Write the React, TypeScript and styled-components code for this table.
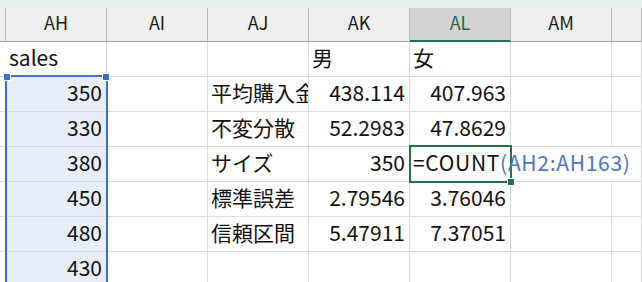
import React from 'react';
import styled, { createGlobalStyle } from 'styled-components';

const GlobalStyle = createGlobalStyle`
  html, body {
    margin: 0;
    padding: 0;
    background: #ffffff;
    overflow: hidden;
  }
  body {
    font-family: "Noto Sans CJK JP", "Noto Sans", sans-serif;
  }
`;

const Window = styled.div`
  width: 642px;
  height: 282px;
  overflow: hidden;
  background: #ffffff;
`;

const TopStrip = styled.div`
  height: 8px;
  background: #e6eef1;
`;

const Sheet = styled.div`
  position: relative;
  display: grid;
  grid-template-columns: 6px repeat(6, 101px) 1fr;
  grid-template-rows: 34px;
  grid-auto-rows: 35px;
`;

const HeadCell = styled.div<{ $active?: boolean }>`
  box-sizing: border-box;
  display: flex;
  align-items: center;
  justify-content: center;
  padding-bottom: ${(p) => (p.$active ? '5px' : '6px')};
  background: ${(p) => (p.$active ? '#d3d3d3' : '#efefef')};
  color: ${(p) => (p.$active ? '#1d6a40' : '#1a1a1a')};
  border-right: 1px solid #b9b9b9;
  border-bottom: ${(p) => (p.$active ? '2px solid #217346' : '1px solid #a3a3a3')};
  font-size: 18px;
`;

const Cell = styled.div<{ $align?: 'left' | 'right'; $selected?: boolean; $noRight?: boolean }>`
  box-sizing: border-box;
  display: flex;
  align-items: center;
  justify-content: ${(p) => (p.$align === 'right' ? 'flex-end' : 'flex-start')};
  padding: 0 4px 5px 3px;
  background: ${(p) => (p.$selected ? '#e8eef8' : '#ffffff')};
  border-right: 1px solid ${(p) => (p.$noRight ? 'transparent' : '#d9d9d9')};
  border-bottom: 1px solid #d9d9d9;
  font-size: 21px;
  color: #111111;
  white-space: nowrap;
  overflow: hidden;
`;

/* absolutely placed grid children take their grid area as containing block
   and do not take part in auto placement */
const Selection = styled.div`
  position: absolute;
  grid-column: 2 / 3;
  grid-row: 3 / span 7;
  top: -2px;
  left: -1px;
  right: -1px;
  bottom: 0;
  border: 2px solid #3d6fc6;
  border-bottom: none;
  pointer-events: none;
`;

const Handle = styled.span<{ $side: 'left' | 'right' }>`
  position: absolute;
  top: -4px;
  ${(p) => (p.$side === 'left' ? 'left: -4px;' : 'right: -4px;')}
  width: 6px;
  height: 6px;
  background: #3d6fc6;
  border: 1px solid #ffffff;
`;

const ActiveCell = styled.div`
  position: absolute;
  grid-column: 6 / 7;
  grid-row: 5 / 6;
  top: -2px;
  left: -1px;
  right: -1px;
  bottom: -1px;
  border: 2px solid #217346;
  display: flex;
  align-items: center;
  padding: 0 0 4px 2px;
  font-size: 21px;
  letter-spacing: 0.7px;
  color: #111111;
  white-space: nowrap;
  overflow: visible;
  background: #ffffff;
`;

const Ref = styled.span`
  color: #4a76c8;
`;

const FillHandle = styled.span`
  position: absolute;
  right: -5px;
  bottom: -5px;
  width: 6px;
  height: 6px;
  background: #217346;
  border: 1px solid #ffffff;
`;

const columns = ['AH', 'AI', 'AJ', 'AK', 'AL', 'AM'];

type Row = [string, string, string, string, string];

const rows: Row[] = [
  ['sales', '', '', '男', '女'],
  ['350', '', '平均購入金額', '438.114', '407.963'],
  ['330', '', '不変分散', '52.2983', '47.8629'],
  ['380', '', 'サイズ', '350', ''],
  ['450', '', '標準誤差', '2.79546', '3.76046'],
  ['480', '', '信頼区間', '5.47911', '7.37051'],
  ['430', '', '', '', ''],
];

const isNumber = (v: string) => /^[0-9.]+$/.test(v);

const App: React.FC = () => {
  return (
    <Window>
      <GlobalStyle />
      <TopStrip />
      <Sheet>
        <HeadCell />
        {columns.map((c) => (
          <HeadCell key={c} $active={c === 'AL'}>
            {c}
          </HeadCell>
        ))}
        <HeadCell />

        {rows.map((row, r) => (
          <React.Fragment key={r}>
            <Cell />
            {row.map((v, c) => (
              <Cell
                key={c}
                $align={isNumber(v) ? 'right' : 'left'}
                $selected={c === 0 && r > 0}
              >
                {v}
              </Cell>
            ))}
            <Cell $noRight={r === 3} />
            <Cell />
          </React.Fragment>
        ))}

        <Selection>
          <Handle $side="left" />
          <Handle $side="right" />
        </Selection>

        <ActiveCell>
          =COUNT<Ref>(AH2:AH163)</Ref>
          <FillHandle />
        </ActiveCell>
      </Sheet>
    </Window>
  );
};

export default App;
